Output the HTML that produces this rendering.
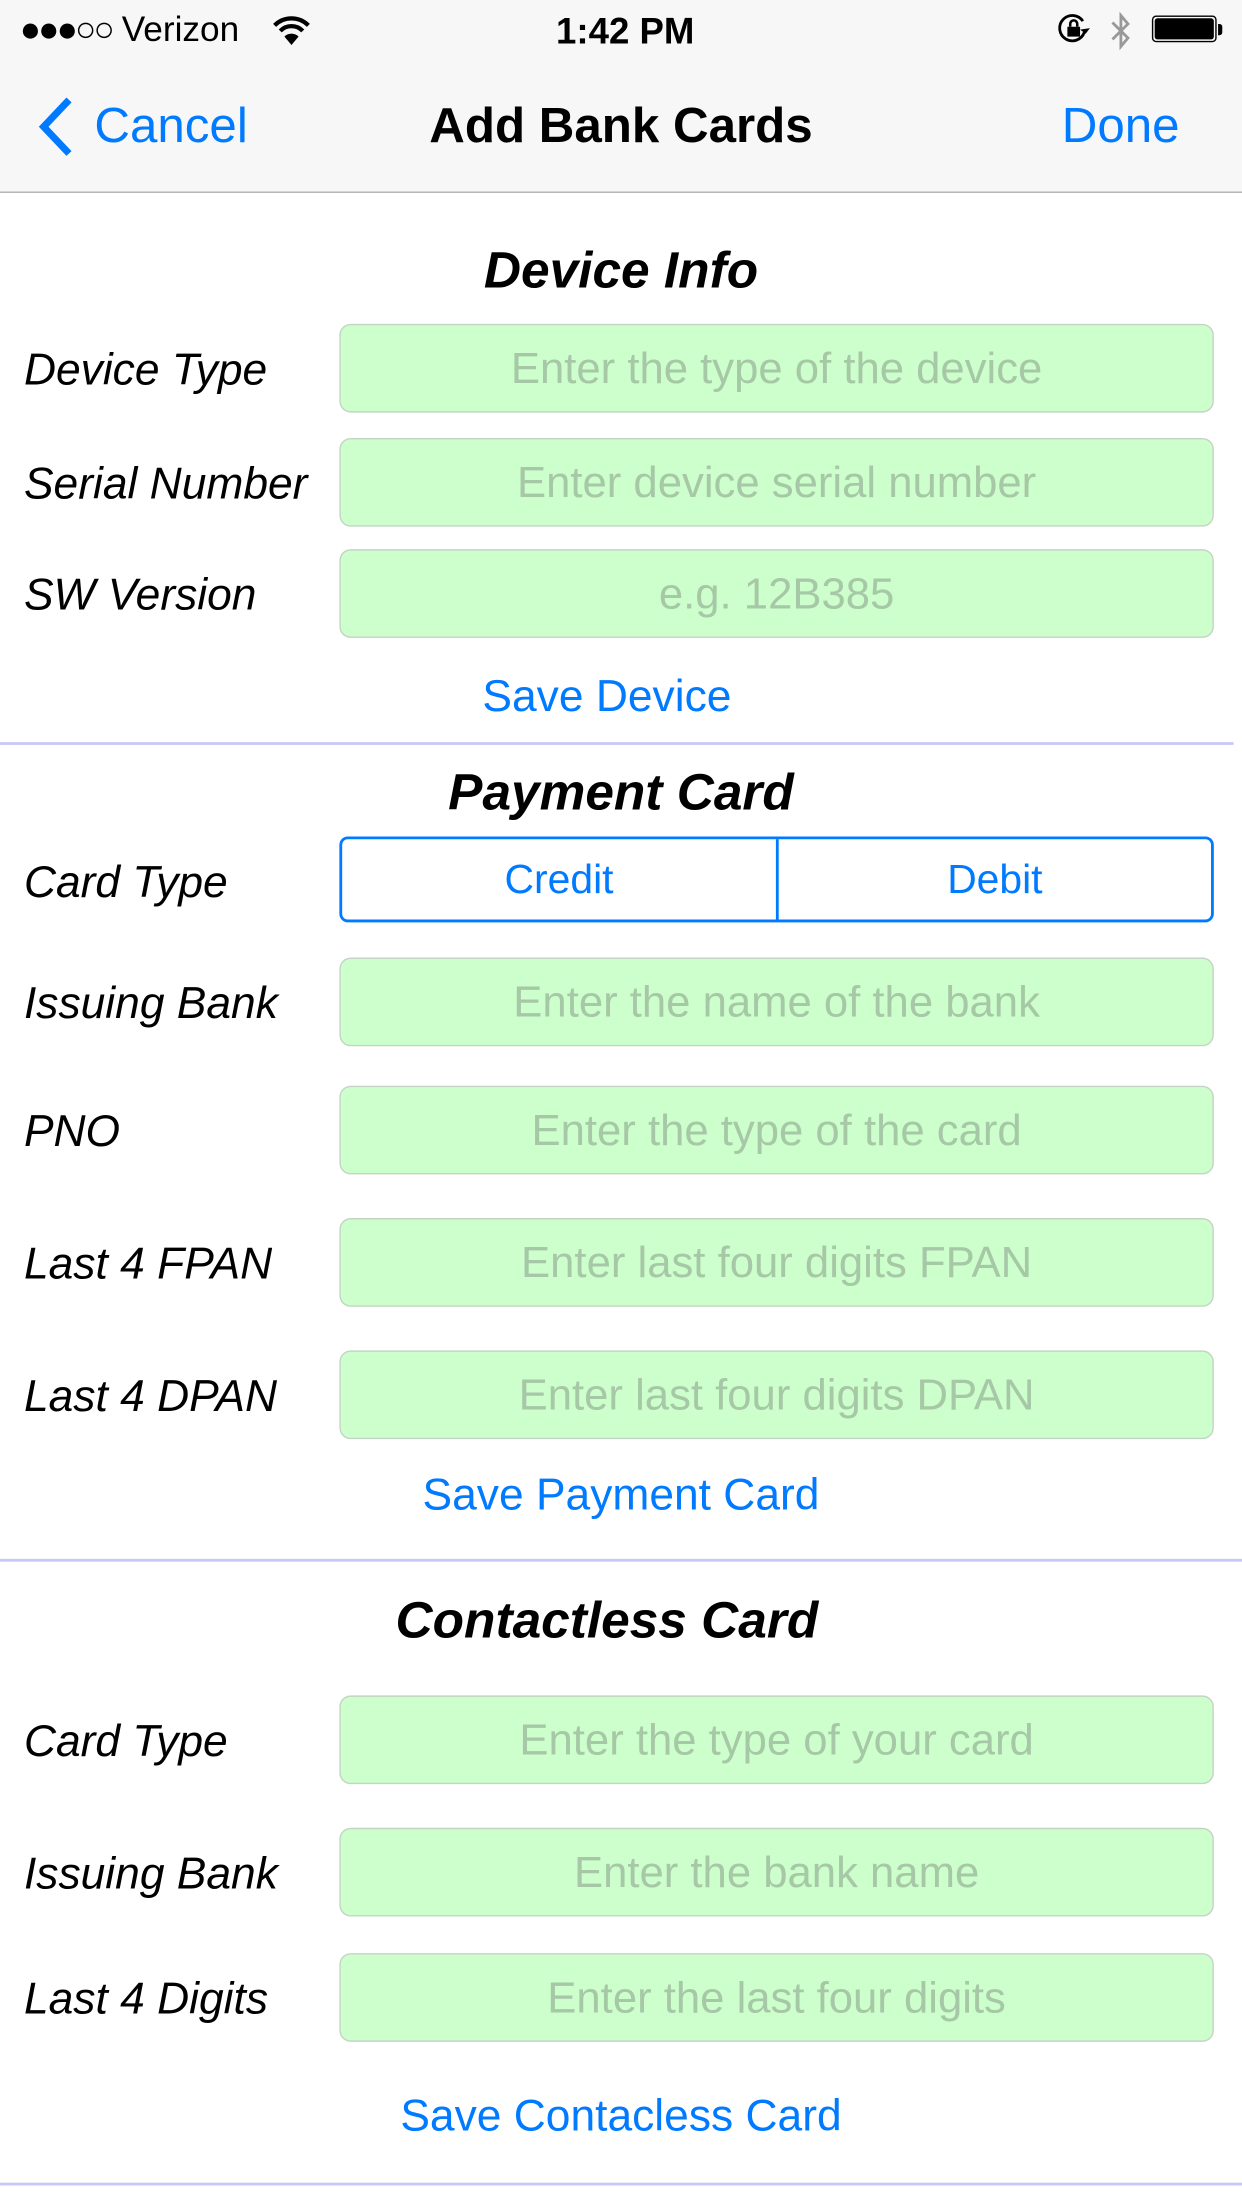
<!DOCTYPE html>
<html><head><meta charset="utf-8"><style>
html,body{margin:0;padding:0;width:1242px;height:2208px;overflow:hidden;background:#fff;font-family:"Liberation Sans",Arial,sans-serif}
#w{position:absolute;left:0;top:0;width:882px;height:1568px;transform:scale(1.408163);transform-origin:0 0}
.a{position:absolute;white-space:nowrap}
.nav{position:absolute;left:0;top:0;width:882px;height:136px;background:#f7f7f7;border-bottom:1px solid #b2b2b2}
.lbl{position:absolute;left:17px;font-style:italic;font-size:31.5px;color:#000;height:62px;line-height:64px}
.fld{position:absolute;left:241px;width:621px;height:63px;border:1px solid #c4d4c4;border-radius:8px;background:#ccffcc;color:#a6c8a6;font-size:31px;text-align:center;line-height:61px;box-sizing:border-box}
.hd{position:absolute;left:0;width:882px;text-align:center;font-weight:bold;font-style:italic;font-size:36.5px;color:#000}
.btn{position:absolute;left:0;width:882px;text-align:center;color:#007aff;font-size:31.5px}
.sep{position:absolute;left:0;width:876px;height:2px;background:#c8c8f6}
</style></head><body><div id="w">
<div class="nav"></div>
<div class="a" style="left:14px;top:7px;font-size:25px;color:#000"><span style="letter-spacing:-2px">●●●○○</span> Verizon</div>
<svg class="a" style="left:193px;top:10px" width="28" height="24" viewBox="0 0 28 24"><path d="M2 8 A17 17 0 0 1 26 8" stroke="#000" stroke-width="3" fill="none"/><path d="M6 12 A11 11 0 0 1 22 12" stroke="#000" stroke-width="3" fill="none"/><path d="M14 22 L9 16 A7 7 0 0 1 19 16 Z" fill="#000"/></svg>
<div class="a" style="left:0;width:888px;text-align:center;top:7px;font-size:26px;font-weight:bold;color:#000">1:42 PM</div>
<svg class="a" style="left:751px;top:9px" width="24" height="24" viewBox="0 0 24 24"><path d="M19 14 A9 9 0 1 1 18 6" stroke="#000" stroke-width="2" fill="none"/><path d="M16 12 l4 3 l3-4z" fill="#000"/><rect x="7" y="10" width="9" height="7" fill="#000"/><path d="M9 10 V8 a2.5 2.5 0 0 1 5 0 V10" stroke="#000" stroke-width="1.8" fill="none"/></svg>
<svg class="a" style="left:787px;top:8px" width="18" height="28" viewBox="0 0 18 28"><path d="M3 8 L14 19 L9 25 V3 L14 9 L3 20" stroke="#999" stroke-width="2" fill="none"/></svg>
<div class="a" style="left:818px;top:11px;width:46px;height:19px;border:1px solid #000;border-radius:3px;box-sizing:border-box;padding:1px"><div style="width:100%;height:100%;background:#000;border-radius:2px"></div></div>
<div class="a" style="left:865px;top:17px;width:3px;height:8px;background:#000;border-radius:0 2px 2px 0"></div>
<svg class="a" style="left:25px;top:68px" width="30" height="44" viewBox="0 0 30 44"><path d="M24 3 L6 22 L24 41" stroke="#007aff" stroke-width="5" fill="none"/></svg>
<div class="a" style="left:67px;top:70px;font-size:35px;color:#007aff">Cancel</div>
<div class="a" style="left:0;width:882px;text-align:center;top:70px;font-size:35px;font-weight:bold;color:#000">Add Bank Cards</div>
<div class="a" style="left:754px;top:70px;font-size:35px;color:#007aff">Done</div>

<div class="hd" style="top:171px">Device Info</div>
<div class="lbl" style="top:230px">Device Type</div><div class="fld" style="top:230px">Enter the type of the device</div>
<div class="lbl" style="top:311px">Serial Number</div><div class="fld" style="top:311px">Enter device serial number</div>
<div class="lbl" style="top:390px">SW Version</div><div class="fld" style="top:390px">e.g. 12B385</div>
<div class="btn" style="top:476px;left:-10px">Save Device</div>
<div class="sep" style="top:527px"></div>

<div class="hd" style="top:542px">Payment Card</div>
<div class="lbl" style="top:594px">Card Type</div>
<div class="a" style="left:241px;top:594px;width:621px;height:61px;border:2px solid #007aff;border-radius:6px;box-sizing:border-box;display:flex">
<div style="width:308px;border-right:2px solid #007aff;text-align:center;line-height:59px;font-size:29px;color:#007aff">Credit</div>
<div style="flex:1;text-align:center;line-height:59px;font-size:29px;color:#007aff">Debit</div></div>
<div class="lbl" style="top:680px">Issuing Bank</div><div class="fld" style="top:680px">Enter the name of the bank</div>
<div class="lbl" style="top:771px">PNO</div><div class="fld" style="top:771px">Enter the type of the card</div>
<div class="lbl" style="top:865px">Last 4 FPAN</div><div class="fld" style="top:865px">Enter last four digits FPAN</div>
<div class="lbl" style="top:959px">Last 4 DPAN</div><div class="fld" style="top:959px">Enter last four digits DPAN</div>
<div class="btn" style="top:1043px">Save Payment Card</div>
<div class="sep" style="top:1107px;width:882px"></div>

<div class="hd" style="top:1130px;left:-10px">Contactless Card</div>
<div class="lbl" style="top:1204px">Card Type</div><div class="fld" style="top:1204px">Enter the type of your card</div>
<div class="lbl" style="top:1298px">Issuing Bank</div><div class="fld" style="top:1298px">Enter the bank name</div>
<div class="lbl" style="top:1387px">Last 4 Digits</div><div class="fld" style="top:1387px">Enter the last four digits</div>
<div class="btn" style="top:1484px">Save Contacless Card</div>
<div class="sep" style="top:1550px;width:882px"></div>
</div></body></html>
